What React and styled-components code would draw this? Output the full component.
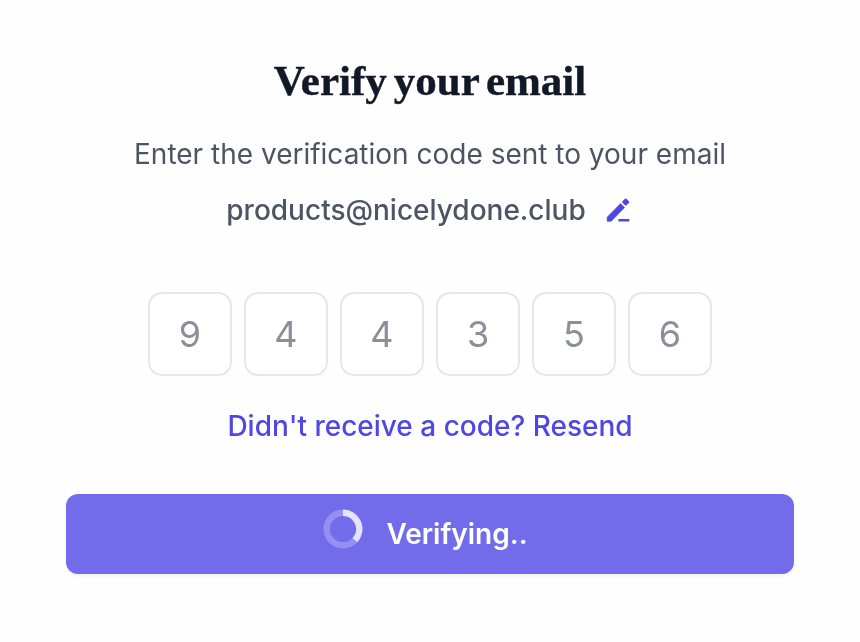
import React from 'react';
import styled, { createGlobalStyle } from 'styled-components';

const CODE = ['9', '4', '4', '3', '5', '6'];

const GlobalStyle = createGlobalStyle`
  * {
    box-sizing: border-box;
  }
  body {
    margin: 0;
    background: #fefefe;
    font-family: Inter, "Liberation Sans", sans-serif;
  }
`;

const Page = styled.main`
  display: flex;
  flex-direction: column;
  align-items: center;
  width: 860px;
  height: 642px;
  padding: 55px 66px 0;
  overflow: hidden;
  will-change: transform;
`;

const Title = styled.h1`
  margin: 0;
  height: 52px;
  line-height: 52px;
  font-family: "Liberation Serif", serif;
  font-size: 43px;
  font-weight: 700;
  word-spacing: -3.8px;
  color: #111827;
  white-space: nowrap;
  -webkit-text-stroke: 0.4px #111827;
`;

const Message = styled.p`
  margin: 27px 0 0;
  line-height: 40px;
  font-size: 28px;
  color: #4b5563;
  white-space: nowrap;
`;

const EmailRow = styled.div`
  display: flex;
  align-items: center;
  gap: 20px;
  height: 40px;
  margin-top: 16px;
  padding-right: 2px;
`;

const Email = styled.span`
  line-height: 40px;
  font-size: 28px;
  font-weight: 500;
  color: #4b5563;
`;

const EditButton = styled.button`
  display: flex;
  width: 26px;
  height: 26px;
  padding: 0;
  border: 0;
  background: transparent;
  color: #4f46e5;
  cursor: pointer;
`;

const CodeRow = styled.div`
  display: flex;
  gap: 12px;
  margin-top: 62px;
`;

const CodeInput = styled.input`
  width: 84px;
  height: 84px;
  padding: 0;
  border: 2px solid #e5e7eb;
  border-radius: 14px;
  background: #fff;
  font-family: inherit;
  font-size: 36px;
  text-align: center;
  color: #8b8f99;
  outline: none;
`;

const ResendLink = styled.button`
  margin-top: 30px;
  padding: 0;
  border: 0;
  background: transparent;
  font-family: inherit;
  font-size: 28px;
  font-weight: 500;
  line-height: 40px;
  color: #4f46e5;
  white-space: nowrap;
  cursor: pointer;
`;

const SubmitButton = styled.button`
  display: flex;
  align-items: center;
  justify-content: center;
  gap: 23px;
  width: 728px;
  height: 80px;
  margin-top: 48px;
  padding: 0 9px 0 0;
  border: 0;
  border-radius: 12px;
  background: #726bea;
  box-shadow: 0 2px 4px rgba(0, 0, 0, 0.05);
  font-family: inherit;
  font-size: 28px;
  font-weight: 600;
  line-height: 40px;
  color: #fff;
`;

const SpinnerIcon = styled.svg`
  width: 40px;
  height: 40px;
  margin-bottom: 10px;
`;

const PencilIcon = () => (
  <svg width="26" height="26" viewBox="0 0 26 26" fill="currentColor" aria-hidden="true">
    <path d="M1.2 24.2V20.2L14.6 6.6l4 4L5.2 24.2z" stroke="currentColor" strokeWidth="0.7" strokeLinejoin="round" />
    <rect x="16.9" y="2.2" width="5.6" height="5.6" rx="1" transform="rotate(45 19.7 5)" />
    <rect x="12.4" y="21.9" width="11" height="2.6" rx="0.5" />
  </svg>
);

const Spinner = () => (
  <SpinnerIcon viewBox="0 0 40 40" fill="none" aria-hidden="true">
    <circle cx="20" cy="20" r="16.3" stroke="#fff" strokeOpacity="0.25" strokeWidth="6.4" />
    <path d="M20 3.7A16.3 16.3 0 0 1 31.9 31.1" stroke="#fff" strokeOpacity="0.75" strokeWidth="6.4" />
  </SpinnerIcon>
);

const App = () => {
  return (
    <>
      <GlobalStyle />
      <Page>
        <Title>Verify your email</Title>
        <Message>Enter the verification code sent to your email</Message>
        <EmailRow>
          <Email>products@nicelydone.club</Email>
          <EditButton aria-label="Edit email">
            <PencilIcon />
          </EditButton>
        </EmailRow>
        <CodeRow>
          {CODE.map((digit, index) => (
            <CodeInput key={index} defaultValue={digit} maxLength={1} inputMode="numeric" />
          ))}
        </CodeRow>
        <ResendLink>Didn't receive a code? Resend</ResendLink>
        <SubmitButton>
          <Spinner />
          <span>Verifying..</span>
        </SubmitButton>
      </Page>
    </>
  );
};

export default App;
